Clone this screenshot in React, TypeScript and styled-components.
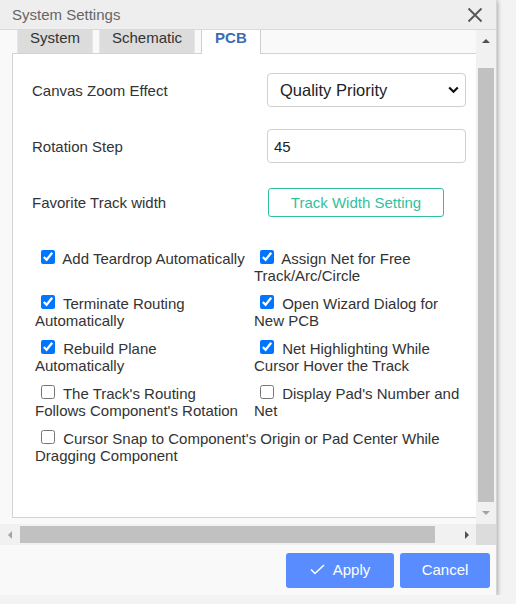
import React from 'react';
import styled, { createGlobalStyle } from 'styled-components';

const GlobalStyle = createGlobalStyle`
  html, body {
    margin: 0;
    padding: 0;
    background: #f3f3f3;
  }
  body {
    font-family: "Liberation Sans", Arial, sans-serif;
    font-size: 15px;
    color: #333;
  }
`;

const Dialog = styled.div`
  width: 496px;
  height: 595px;
  display: flex;
  flex-direction: column;
  background: #f9f9f9;
  border-right: 1px solid #d4d4d4;
  box-shadow: 1px 1px 4px rgba(0, 0, 0, 0.3);
`;

const Header = styled.div`
  height: 29px;
  flex-shrink: 0;
  display: flex;
  align-items: center;
  justify-content: space-between;
  padding: 0 13px 0 12px;
  background: #eeeeee;
  border-bottom: 1px solid #dadada;
`;

const Title = styled.span`
  font-size: 15px;
  color: #666;
`;

const CloseButton = styled.button`
  border: 0;
  padding: 0;
  background: none;
  width: 16px;
  height: 16px;
  display: flex;
  cursor: pointer;
`;

const ScrollArea = styled.div`
  height: 515px;
  flex-shrink: 0;
  display: grid;
  grid-template-columns: 1fr 20px;
  grid-template-rows: 1fr 21px;
  min-height: 0;
`;

const Viewport = styled.div`
  overflow: hidden;
  min-height: 0;
  display: flex;
  flex-direction: column;
  justify-content: flex-end;
  padding: 0 0 6px 12px;
`;

const TabBar = styled.div`
  display: flex;
  align-items: flex-end;
  gap: 6px;
  height: 30px;
  padding-left: 5px;
  flex-shrink: 0;
`;

const Tab = styled.div<{ $active?: boolean }>`
  box-sizing: border-box;
  height: ${(p) => (p.$active ? 31 : 30)}px;
  margin-bottom: ${(p) => (p.$active ? -1 : 0)}px;
  padding: 0 ${(p) => (p.$active ? 13 : 12)}px;
  line-height: 27px;
  font-size: 15px;
  background: ${(p) => (p.$active ? '#fff' : '#dcdcdc')};
  border: 1px solid ${(p) => (p.$active ? '#cfcfcf' : '#e6e6e6')};
  border-bottom: none;
  color: ${(p) => (p.$active ? '#3b6db4' : '#333')};
  font-weight: ${(p) => (p.$active ? 'bold' : 'normal')};
  position: relative;
  z-index: 1;
`;

const Panel = styled.div`
  box-sizing: border-box;
  flex-shrink: 0;
  width: 500px;
  height: 465px;
  background: #fff;
  border: 1px solid #d3d3d3;
  padding: 19px 0 0 19px;
`;

const FormGrid = styled.div`
  display: grid;
  grid-template-columns: 235px 199px;
  grid-auto-rows: 34px;
  row-gap: 22px;
  align-items: center;
`;

const FieldLabel = styled.span`
  font-size: 15px;
  color: #333;
`;

const SelectWrap = styled.div`
  position: relative;
  height: 34px;
`;

const Select = styled.select`
  appearance: none;
  box-sizing: border-box;
  width: 199px;
  height: 34px;
  padding: 0 12px;
  border: 1px solid #d0d0d0;
  border-radius: 4px;
  background: #fff;
  font-family: inherit;
  font-size: 16.5px;
  color: #222;
  outline: none;
`;

const Chevron = styled.svg`
  position: absolute;
  right: 7px;
  top: 13px;
  pointer-events: none;
`;

const TextInput = styled.input`
  box-sizing: border-box;
  width: 199px;
  height: 34px;
  padding: 0 6px;
  border: 1px solid #d0d0d0;
  border-radius: 4px;
  font-family: inherit;
  font-size: 15px;
  color: #222;
  outline: none;
`;

const OutlineButton = styled.button`
  box-sizing: border-box;
  width: 176px;
  height: 29px;
  margin-left: 1px;
  border: 1px solid #2fc29f;
  border-radius: 3px;
  background: #fff;
  color: #34bf9e;
  font-family: inherit;
  font-size: 15px;
  cursor: pointer;
`;

const CheckGrid = styled.div`
  display: grid;
  grid-template-columns: 219px 217px;
  row-gap: 8px;
  margin: 28px 0 0 3px;
`;

const CheckLabel = styled.label<{ $wide?: boolean }>`
  display: block;
  font-size: 15px;
  color: #333;
  grid-column: ${(p) => (p.$wide ? '1 / -1' : 'auto')};
  padding-right: ${(p) => (p.$wide ? 0 : 7)}px;
`;

const Checkbox = styled.input.attrs({ type: 'checkbox' })`
  width: 14px;
  height: 14px;
  margin: 3px 4px 3px 6px;
`;

const VScrollbar = styled.div`
  background: #f1f1f1;
  display: flex;
  flex-direction: column;
`;

const HScrollbar = styled.div`
  background: #f1f1f1;
  display: flex;
  align-items: stretch;
`;

const ScrollButton = styled.div<{ $size: string }>`
  flex: 0 0 ${(p) => p.$size};
  display: flex;
  align-items: center;
  justify-content: center;
`;

const Arrow = styled.span<{ $dir: 'up' | 'down' | 'left' | 'right'; $off?: boolean }>`
  width: 0;
  height: 0;
  ${(p) => {
    const c = p.$off ? '#a3a3a3' : '#505050';
    if (p.$dir === 'up') return `border-left: 4px solid transparent; border-right: 4px solid transparent; border-bottom: 4px solid ${c};`;
    if (p.$dir === 'down') return `border-left: 4px solid transparent; border-right: 4px solid transparent; border-top: 4px solid ${c};`;
    if (p.$dir === 'left') return `border-top: 4px solid transparent; border-bottom: 4px solid transparent; border-right: 4px solid ${c};`;
    return `border-top: 4px solid transparent; border-bottom: 4px solid transparent; border-left: 4px solid ${c};`;
  }}
`;

const VTrack = styled.div`
  flex: 1;
  display: flex;
  padding: 16px 2px 0 2px;
`;

const HTrack = styled.div`
  flex: 1;
  display: flex;
  padding: 2px 0 2px 1px;
`;

const Thumb = styled.div<{ $length?: number }>`
  background: #c1c1c1;
  flex: ${(p) => (p.$length ? `0 0 ${p.$length}px` : '1')};
`;

const Corner = styled.div`
  background: #dcdcdc;
`;

const Footer = styled.div`
  flex: 1;
  display: flex;
  justify-content: flex-end;
  align-items: flex-start;
  gap: 6px;
  padding: 8px 6px 0 0;
`;

const PrimaryButton = styled.button<{ $width: number }>`
  box-sizing: border-box;
  width: ${(p) => p.$width}px;
  height: 35px;
  padding: 0 0 3px;
  border: 0;
  border-radius: 3px;
  background: #588cff;
  color: #fff;
  font-family: inherit;
  font-size: 15px;
  display: flex;
  align-items: center;
  justify-content: center;
  gap: 8px;
  cursor: pointer;
`;

const checks: { text: string; checked: boolean; wide?: boolean }[] = [
  { text: 'Add Teardrop Automatically', checked: true },
  { text: 'Assign Net for Free Track/Arc/Circle', checked: true },
  { text: 'Terminate Routing Automatically', checked: true },
  { text: 'Open Wizard Dialog for New PCB', checked: true },
  { text: 'Rebuild Plane Automatically', checked: true },
  { text: 'Net Highlighting While Cursor Hover the Track', checked: true },
  { text: "The Track's Routing Follows Component's Rotation", checked: false },
  { text: "Display Pad's Number and Net", checked: false },
  { text: "Cursor Snap to Component's Origin or Pad Center While Dragging Component", checked: false, wide: true },
];

const App = () => (
  <>
    <GlobalStyle />
    <Dialog>
      <Header>
        <Title>System Settings</Title>
        <CloseButton aria-label="Close">
          <svg width="16" height="16" viewBox="0 0 16 16">
            <path d="M1.5 1.5 L14.5 14.5 M14.5 1.5 L1.5 14.5" stroke="#555" strokeWidth="1.8" fill="none" />
          </svg>
        </CloseButton>
      </Header>

      <ScrollArea>
        <Viewport>
          <TabBar>
            <Tab>System</Tab>
            <Tab>Schematic</Tab>
            <Tab $active>PCB</Tab>
          </TabBar>
          <Panel>
            <FormGrid>
              <FieldLabel>Canvas Zoom Effect</FieldLabel>
              <SelectWrap>
                <Select defaultValue="quality">
                  <option value="quality">Quality Priority</option>
                  <option value="speed">Speed Priority</option>
                </Select>
                <Chevron width="11" height="8" viewBox="0 0 11 8">
                  <path d="M1.2 1.5 L5.5 5.8 L9.8 1.5" stroke="#111" strokeWidth="2.2" fill="none" />
                </Chevron>
              </SelectWrap>

              <FieldLabel>Rotation Step</FieldLabel>
              <TextInput defaultValue="45" />

              <FieldLabel>Favorite Track width</FieldLabel>
              <OutlineButton>Track Width Setting</OutlineButton>
            </FormGrid>

            <CheckGrid>
              {checks.map((c) => (
                <CheckLabel key={c.text} $wide={c.wide}>
                  <Checkbox defaultChecked={c.checked} /> {c.text}
                </CheckLabel>
              ))}
            </CheckGrid>
          </Panel>
        </Viewport>

        <VScrollbar>
          <ScrollButton $size="22px">
            <Arrow $dir="up" />
          </ScrollButton>
          <VTrack>
            <Thumb />
          </VTrack>
          <ScrollButton $size="22px">
            <Arrow $dir="down" $off />
          </ScrollButton>
        </VScrollbar>

        <HScrollbar>
          <ScrollButton $size="19px">
            <Arrow $dir="left" $off />
          </ScrollButton>
          <HTrack>
            <Thumb $length={415} />
          </HTrack>
          <ScrollButton $size="19px">
            <Arrow $dir="right" />
          </ScrollButton>
        </HScrollbar>

        <Corner />
      </ScrollArea>

      <Footer>
        <PrimaryButton $width={108}>
          <svg width="15" height="11" viewBox="0 0 15 11">
            <path d="M1 5.5 L5 9.5 L14 1" stroke="#fff" strokeWidth="1.6" fill="none" />
          </svg>
          Apply
        </PrimaryButton>
        <PrimaryButton $width={90}>Cancel</PrimaryButton>
      </Footer>
    </Dialog>
  </>
);

export default App;
